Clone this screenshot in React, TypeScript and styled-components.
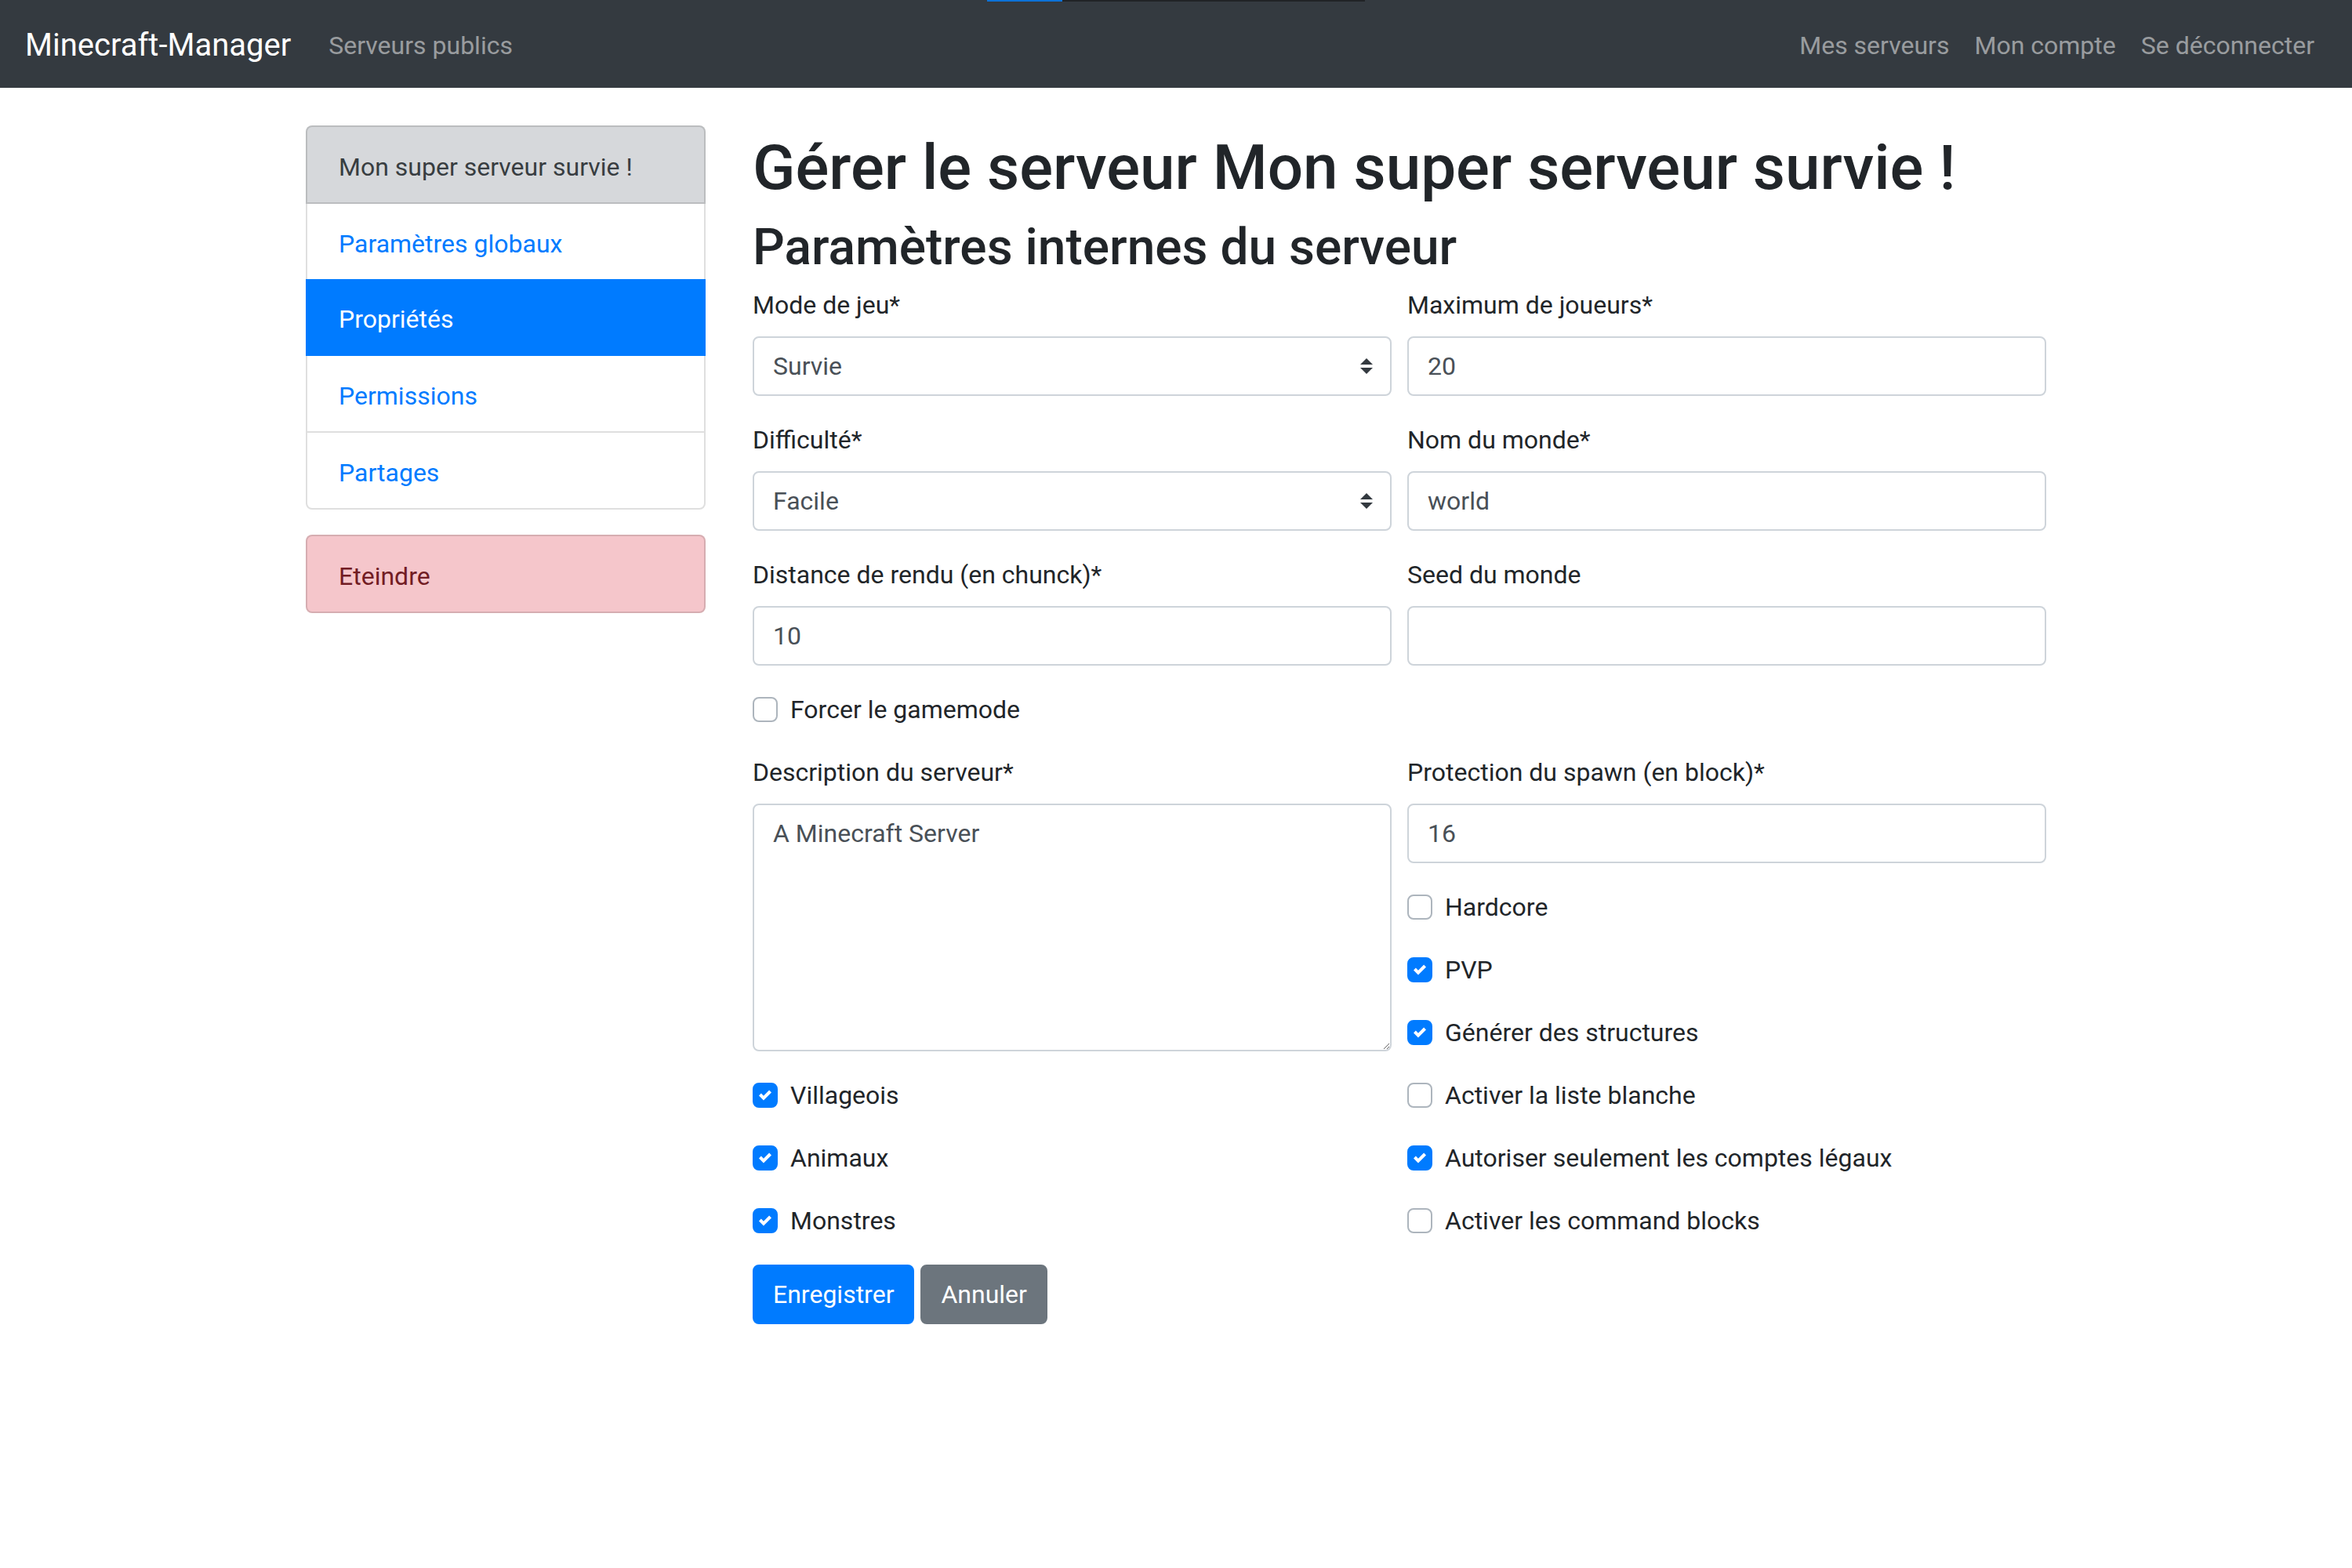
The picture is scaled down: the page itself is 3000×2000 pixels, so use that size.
import React from "react";
import styled, { createGlobalStyle, css } from "styled-components";

const GlobalStyle = createGlobalStyle`
  *, *::before, *::after { box-sizing: border-box; }
  html, body { margin: 0; padding: 0; }
  body {
    font-family: Roboto, "Noto Sans", "Liberation Sans", sans-serif;
    font-size: 32px;
    line-height: 1.5;
    color: #212529;
    background: #fff;
  }
`;

const Navbar = styled.nav`
  position: relative;
  display: flex;
  align-items: center;
  height: 112px;
  padding: 16px 32px;
  background: #343a40;
`;

const LoadBar = styled.div`
  position: absolute;
  top: 0;
  left: 1259px;
  width: 482px;
  height: 2px;
  display: flex;
  background: #212326;
`;

const LoadFill = styled.div`
  width: 96px;
  background: #0c72d8;
`;

const Brand = styled.a`
  font-size: 40px;
  line-height: 60px;
  padding: 12px 0 8px;
  margin-right: 32px;
  color: #fff;
  text-decoration: none;
  white-space: nowrap;
`;

const NavList = styled.div<{ $end?: boolean }>`
  display: flex;
  ${(p) => p.$end && "margin-left: auto;"}
`;

const NavLink = styled.a`
  padding: 18px 16px 14px;
  line-height: 48px;
  color: rgba(255, 255, 255, 0.5);
  text-decoration: none;
  white-space: nowrap;
`;

const Container = styled.div`
  width: 2220px;
  margin: 48px auto 0;
  display: grid;
  grid-template-columns: 510px 1fr;
  column-gap: 60px;
  align-items: start;
`;

const ListGroup = styled.div<{ $spaced?: boolean }>`
  display: flex;
  flex-direction: column;
  ${(p) => p.$spaced && "margin-top: 32px;"}
`;

type ItemVariant = "default" | "secondary" | "active" | "danger";

const itemColors: Record<ItemVariant, { bg: string; fg: string }> = {
  default: { bg: "#fff", fg: "#007bff" },
  secondary: { bg: "#d6d8db", fg: "#383d41" },
  active: { bg: "#007bff", fg: "#fff" },
  danger: { bg: "#f5c6cb", fg: "#721c24" },
};

const ListItem = styled.a<{ $variant: ItemVariant }>`
  position: relative;
  display: block;
  padding: 27px 40px 21px;
  line-height: 48px;
  border: 2px solid rgba(0, 0, 0, 0.125);
  text-decoration: none;
  background: ${(p) => itemColors[p.$variant].bg};
  color: ${(p) => itemColors[p.$variant].fg};
  & + & { border-top-width: 0; }
  &:first-child { border-top-left-radius: 8px; border-top-right-radius: 8px; }
  &:last-child { border-bottom-left-radius: 8px; border-bottom-right-radius: 8px; }
  ${(p) =>
    p.$variant === "active" &&
    css`
      && {
        margin-top: -2px;
        border-top-width: 2px;
        border-color: #007bff;
        z-index: 2;
      }
    `}
`;

const Main = styled.main`
  min-width: 0;
`;

const Title = styled.h1`
  margin: 0 0 10px;
  padding-top: 6px;
  font-size: 80px;
  font-weight: 500;
  line-height: 1.2;
`;

const Subtitle = styled.h2`
  margin: 0 0 10px;
  padding-top: 6px;
  font-size: 64px;
  font-weight: 500;
  line-height: 1.2;
`;

const FormRow = styled.div`
  display: grid;
  grid-template-columns: 1fr 1fr;
  column-gap: 20px;
`;

const Col = styled.div`
  min-width: 0;
`;

const FormGroup = styled.div`
  margin-bottom: 32px;
`;

const Label = styled.label`
  display: inline-block;
  margin-bottom: 16px;
`;

const inputBase = css`
  display: block;
  width: 100%;
  height: 76px;
  padding: 12px 24px;
  font: inherit;
  font-size: 32px;
  line-height: 48px;
  color: #495057;
  background: #fff;
  border: 2px solid #ced4da;
  border-radius: 8px;
  outline: none;
`;

const TextInput = styled.input`
  ${inputBase}
`;

const TextArea = styled.textarea`
  ${inputBase}
  height: 316px;
  resize: vertical;
`;

const SelectWrap = styled.div`
  position: relative;
`;

const Select = styled.select`
  ${inputBase}
  appearance: none;
  padding-right: 56px;
`;

const SelectArrow = styled.svg`
  position: absolute;
  right: 24px;
  top: 50%;
  width: 16px;
  height: 20px;
  margin-top: -10px;
  pointer-events: none;
`;

const Check = styled.label`
  display: flex;
  align-items: flex-start;
  min-height: 48px;
  margin-bottom: 32px;
  cursor: pointer;
`;

const CheckBox = styled.span<{ $checked: boolean }>`
  flex-shrink: 0;
  display: flex;
  align-items: center;
  justify-content: center;
  width: 32px;
  height: 32px;
  margin-top: 8px;
  margin-right: 16px;
  border-radius: 8px;
  border: 2px solid ${(p) => (p.$checked ? "#007bff" : "#adb5bd")};
  background: ${(p) => (p.$checked ? "#007bff" : "#fff")};
`;

const ButtonBar = styled.div`
  display: flex;
  gap: 8px;
`;

const Button = styled.button<{ $variant: "primary" | "secondary" }>`
  font: inherit;
  font-size: 32px;
  line-height: 48px;
  padding: 12px 24px;
  border-radius: 8px;
  color: #fff;
  border: 2px solid ${(p) => (p.$variant === "primary" ? "#007bff" : "#6c757d")};
  background: ${(p) => (p.$variant === "primary" ? "#007bff" : "#6c757d")};
  cursor: pointer;
`;

const Field: React.FC<{ label: string; children: React.ReactNode }> = ({ label, children }) => (
  <FormGroup>
    <Label>{label}</Label>
    {children}
  </FormGroup>
);

const SelectField: React.FC<{ label: string; value: string }> = ({ label, value }) => (
  <Field label={label}>
    <SelectWrap>
      <Select defaultValue={value}>
        <option>{value}</option>
      </Select>
      <SelectArrow viewBox="0 0 4 5" preserveAspectRatio="none">
        <path fill="#343a40" d="M2 0L0 2h4zm0 5L0 3h4z" />
      </SelectArrow>
    </SelectWrap>
  </Field>
);

const CheckField: React.FC<{ label: string; checked?: boolean }> = ({ label, checked = false }) => (
  <Check>
    <CheckBox $checked={checked}>
      {checked && (
        <svg width="16" height="16" viewBox="0 0 8 8">
          <path fill="#fff" d="M6.564.75l-3.59 3.612-1.538-1.55L0 4.26l2.974 2.99L8 2.193z" />
        </svg>
      )}
    </CheckBox>
    <span>{label}</span>
  </Check>
);

export default function App() {
  return (
    <>
      <GlobalStyle />
      <Navbar>
        <LoadBar>
          <LoadFill />
        </LoadBar>
        <Brand href="#">Minecraft-Manager</Brand>
        <NavList>
          <NavLink href="#">Serveurs publics</NavLink>
        </NavList>
        <NavList $end>
          <NavLink href="#">Mes serveurs</NavLink>
          <NavLink href="#">Mon compte</NavLink>
          <NavLink href="#">Se déconnecter</NavLink>
        </NavList>
      </Navbar>
      <Container>
        <aside>
          <ListGroup>
            <ListItem $variant="secondary">Mon super serveur survie !</ListItem>
            <ListItem $variant="default" href="#">Paramètres globaux</ListItem>
            <ListItem $variant="active" href="#">Propriétés</ListItem>
            <ListItem $variant="default" href="#">Permissions</ListItem>
            <ListItem $variant="default" href="#">Partages</ListItem>
          </ListGroup>
          <ListGroup $spaced>
            <ListItem $variant="danger" href="#">Eteindre</ListItem>
          </ListGroup>
        </aside>
        <Main>
          <Title>Gérer le serveur Mon super serveur survie !</Title>
          <Subtitle>Paramètres internes du serveur</Subtitle>
          <form onSubmit={(e) => e.preventDefault()}>
            <FormRow>
              <SelectField label="Mode de jeu*" value="Survie" />
              <Field label="Maximum de joueurs*">
                <TextInput defaultValue="20" />
              </Field>
            </FormRow>
            <FormRow>
              <SelectField label="Difficulté*" value="Facile" />
              <Field label="Nom du monde*">
                <TextInput defaultValue="world" />
              </Field>
            </FormRow>
            <FormRow>
              <Field label="Distance de rendu (en chunck)*">
                <TextInput defaultValue="10" />
              </Field>
              <Field label="Seed du monde">
                <TextInput defaultValue="" />
              </Field>
            </FormRow>
            <CheckField label="Forcer le gamemode" />
            <FormRow>
              <Col>
                <Field label="Description du serveur*">
                  <TextArea defaultValue="A Minecraft Server" />
                </Field>
              </Col>
              <Col>
                <Field label="Protection du spawn (en block)*">
                  <TextInput defaultValue="16" />
                </Field>
                <CheckField label="Hardcore" />
                <CheckField label="PVP" checked />
                <CheckField label="Générer des structures" checked />
              </Col>
            </FormRow>
            <FormRow>
              <Col>
                <CheckField label="Villageois" checked />
                <CheckField label="Animaux" checked />
                <CheckField label="Monstres" checked />
              </Col>
              <Col>
                <CheckField label="Activer la liste blanche" />
                <CheckField label="Autoriser seulement les comptes légaux" checked />
                <CheckField label="Activer les command blocks" />
              </Col>
            </FormRow>
            <ButtonBar>
              <Button $variant="primary" type="submit">Enregistrer</Button>
              <Button $variant="secondary" type="button">Annuler</Button>
            </ButtonBar>
          </form>
        </Main>
      </Container>
    </>
  );
}
